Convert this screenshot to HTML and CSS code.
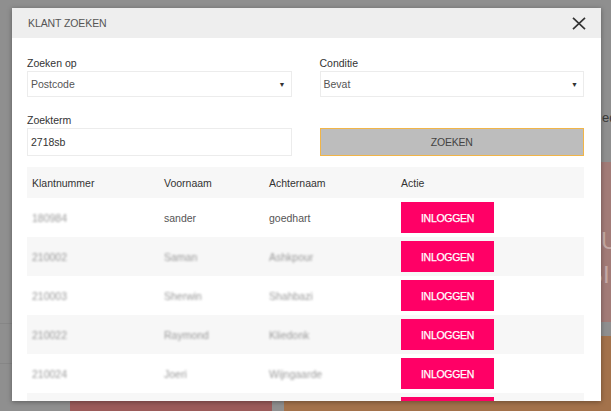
FILE: index.html
```html
<!DOCTYPE html>
<html lang="nl">
<head>
<meta charset="utf-8">
<title>Klant zoeken</title>
<link rel="stylesheet" href="styles.css">
</head>
<body>
<div class="page">
  <div class="side-list">
    <div class="side-item"></div>
    <div class="side-item"></div>
  </div>
  <div class="intro">edities</div>
  <div class="tiles tiles-top">
    <div class="tile tile-blank"></div>
    <div class="tile tile-rose">
      <span class="tile-line">UW SALDO</span>
      <span class="tile-line tile-line-2">BIEDINGEN</span>
    </div>
  </div>
  <div class="tiles tiles-bottom">
    <div class="tile tile-red"></div>
    <div class="tile tile-orange"><span class="tile-title">MIJN SPAARPUNTEN.</span></div>
  </div>
</div>

<div class="overlay">
  <div class="modal">
    <div class="modal-header">
      <span class="modal-title">KLANT ZOEKEN</span>
      <svg class="close" width="14" height="13" viewBox="0 0 14 13" aria-label="Sluiten">
        <path d="M1 0.8 L13 12.2 M13 0.8 L1 12.2" stroke="#333" stroke-width="1.7" fill="none"/>
      </svg>
    </div>
    <div class="modal-body">
      <div class="form-grid">
        <div class="field">
          <label class="label">Zoeken op</label>
          <div class="select"><span>Postcode</span><span class="arrow">▼</span></div>
        </div>
        <div class="field">
          <label class="label">Conditie</label>
          <div class="select"><span>Bevat</span><span class="arrow">▼</span></div>
        </div>
        <div class="field">
          <label class="label">Zoekterm</label>
          <div class="input">2718sb</div>
        </div>
        <div class="field">
          <label class="label">&nbsp;</label>
          <button class="search">ZOEKEN</button>
        </div>
      </div>

      <table class="results">
        <colgroup>
          <col class="c1"><col class="c2"><col class="c3"><col class="c4">
        </colgroup>
        <thead>
          <tr><th>Klantnummer</th><th>Voornaam</th><th>Achternaam</th><th>Actie</th></tr>
        </thead>
        <tbody>
          <tr><td><span class="blur">180984</span></td><td>sander</td><td>goedhart</td><td><button class="login">INLOGGEN</button></td></tr>
          <tr><td><span class="blur">210002</span></td><td><span class="blur">Saman</span></td><td><span class="blur">Ashkpour</span></td><td><button class="login">INLOGGEN</button></td></tr>
          <tr><td><span class="blur">210003</span></td><td><span class="blur">Sherwin</span></td><td><span class="blur">Shahbazi</span></td><td><button class="login">INLOGGEN</button></td></tr>
          <tr><td><span class="blur">210022</span></td><td><span class="blur">Raymond</span></td><td><span class="blur">Kliedonk</span></td><td><button class="login">INLOGGEN</button></td></tr>
          <tr><td><span class="blur">210024</span></td><td><span class="blur">Joeri</span></td><td><span class="blur">Wijngaarde</span></td><td><button class="login">INLOGGEN</button></td></tr>
          <tr><td><span class="blur">210031</span></td><td><span class="blur">Mark</span></td><td><span class="blur">Jansen</span></td><td><button class="login">INLOGGEN</button></td></tr>
        </tbody>
      </table>
    </div>
  </div>
</div>
</body>
</html>
```

FILE: styles.css
```css
* { box-sizing: border-box; }

html, body {
  margin: 0;
  padding: 0;
}

body {
  width: 611px;
  height: 411px;
  overflow: hidden;
  position: relative;
  background: #8f8f8f;
  font-family: "Liberation Sans", Arial, sans-serif;
  font-size: 10.5px;
  color: #333;
}

/* ---------- background page (dimmed) ---------- */
.page {
  height: 411px;
  display: flex;
  flex-direction: column;
  position: relative;
}

.side-list {
  position: absolute;
  left: 0;
  top: 323px;
  width: 70px;
}

.side-item {
  height: 40px;
  border-top: 1px solid #868686;
}

.intro {
  margin-top: 111px;
  height: 14px;
  line-height: 14px;
  padding-left: 602px;
  font-size: 13px;
  color: #3a3a3a;
  white-space: nowrap;
}

.tiles {
  display: flex;
  gap: 12px;
  padding-left: 70px;
}

.tiles-top {
  margin-top: 37px;
  height: 171px;
}

.tiles-bottom {
  margin-top: 14px;
  height: 80px;
}

.tile {
  overflow: hidden;
}

.tile-blank,
.tile-red {
  width: 202px;
}

.tile-red {
  background: #9b5b5a;
}

.tile-rose {
  flex: 1;
  background: #a27b77;
  display: flex;
  flex-direction: column;
  padding: 62px 0 0 317px;
  color: #c4a9a5;
  font-size: 24px;
  line-height: 34px;
  white-space: nowrap;
}

.tile-line-2 {
  text-indent: -14px;
}

.tile-orange {
  flex: 1;
  background: #a3724b;
  display: flex;
  justify-content: flex-end;
  padding: 35px 13px 0 0;
  color: #e2cdbb;
  font-size: 25px;
  line-height: 26px;
  letter-spacing: 0.5px;
  white-space: nowrap;
}

/* ---------- modal ---------- */
.overlay {
  position: absolute;
  inset: 0;
}

.modal {
  position: absolute;
  left: 12px;
  top: 8px;
  width: 589px;
  height: 393px;
  background: #fff;
  overflow: hidden;
  box-shadow: 0 1px 5px rgba(0, 0, 0, 0.35);
}

.modal-header {
  height: 30px;
  background: #eeeeee;
  display: flex;
  align-items: center;
  justify-content: space-between;
  padding: 0 15px 0 16px;
}

.modal-title {
  color: #555;
  font-size: 10.5px;
  letter-spacing: -0.1px;
}

.close {
  display: block;
}

.modal-body {
  padding: 18px 17px 0 15px;
}

.form-grid {
  display: grid;
  grid-template-columns: 1fr 1fr;
  column-gap: 28px;
  row-gap: 16px;
}

.field {
  display: flex;
  flex-direction: column;
}

.label {
  display: block;
  height: 14px;
  line-height: 14px;
  margin-bottom: 1px;
  color: #333;
}

.select {
  height: 26px;
  border: 1px solid #ececec;
  display: flex;
  align-items: center;
  justify-content: space-between;
  padding: 0 5px 0 3px;
  color: #555;
}

.arrow {
  font-size: 7px;
  color: #333;
}

.input {
  height: 28px;
  border: 1px solid #ececec;
  display: flex;
  align-items: center;
  padding: 0 3px;
  color: #333;
}

.search {
  height: 28px;
  width: 100%;
  background: #bdbdbd;
  border: 1px solid #f1b548;
  color: #444;
  font-family: inherit;
  font-size: 10.5px;
  letter-spacing: -0.2px;
  padding: 0;
}

/* ---------- results table ---------- */
.results {
  margin-top: 11px;
  width: 557px;
  border-collapse: collapse;
  table-layout: fixed;
}

.c1 { width: 132px; }
.c2 { width: 105px; }
.c3 { width: 132px; }
.c4 { width: 188px; }

.results th {
  height: 31px;
  background: #f7f7f7;
  text-align: left;
  font-weight: normal;
  color: #333;
  padding: 0 5px;
}

.results td {
  height: 39px;
  padding: 4px 5px;
  color: #555;
  vertical-align: middle;
}

.results tbody tr:nth-child(even) td {
  background: #f7f7f7;
}

.blur {
  display: inline-block;
  color: #9a9a9a;
  filter: blur(1.3px);
}

.login {
  display: block;
  width: 93px;
  height: 31px;
  background: #ff0066;
  border: none;
  color: #fff;
  font-family: inherit;
  font-size: 10.5px;
  letter-spacing: -0.3px;
  -webkit-text-stroke: 0.25px #fff;
  padding: 0;
}
```
